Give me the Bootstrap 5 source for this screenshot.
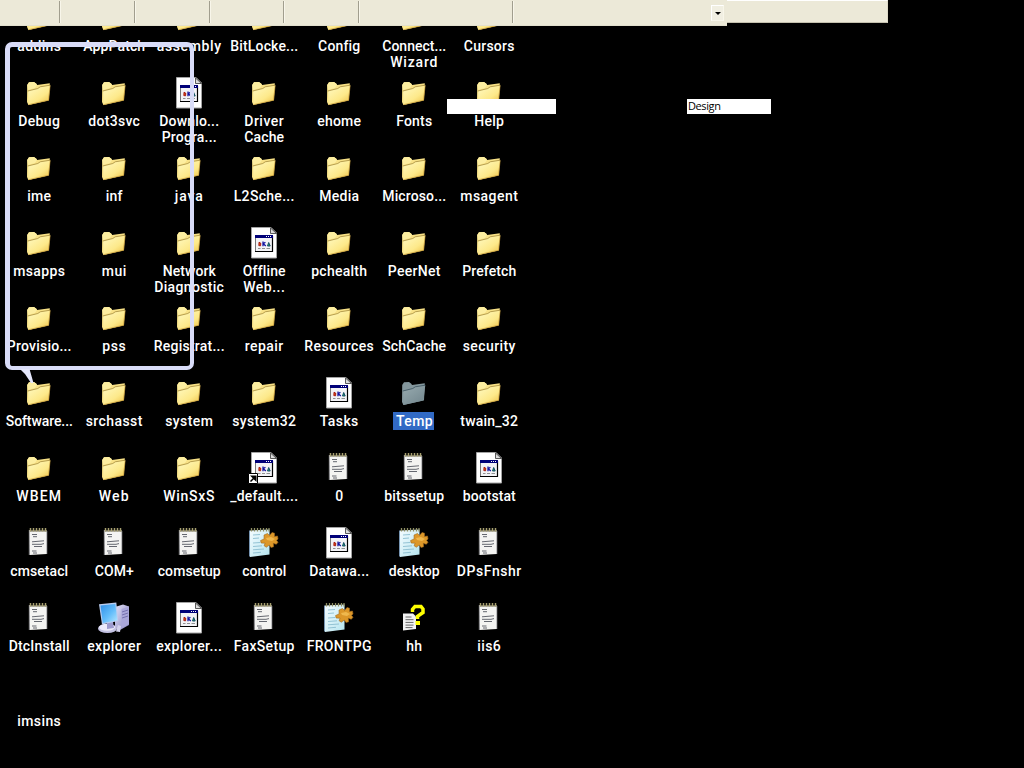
<!DOCTYPE html>
<html lang="en">
<head>
<meta charset="utf-8">
<title>Desktop</title>
<link rel="stylesheet" href="https://cdn.jsdelivr.net/npm/bootstrap@5.3.0/dist/css/bootstrap.min.css">
<style>
  body { background:#000; width:1024px; height:768px; font-family:Roboto,"Liberation Sans",sans-serif; }
  .desk-grid { display:grid; grid-template-columns:repeat(7,75px); grid-auto-rows:75px; padding:2px 0 0 1px; width:526px; }
  .desk-icon { color:#fff; font-size:14px; font-weight:500; line-height:16px; }
  .desk-icon svg { width:32px; height:32px; margin-right:1px; margin-bottom:4px; flex:none; }
  .desk-label { height:16px; width:max-content; padding-left:1.5px; }
  .chosen { background:#316ac5; height:18px; margin-top:-1px; padding:1px 1px 0 3px; }
  .strip-main { width:727px; height:26px; background:#ece9d8; border-bottom:1px solid #e2dfcd; }
  .strip-seg { border-right:1px solid #a19e8e; box-shadow:1px 0 #f8f6ea; height:22px; margin-top:1px; flex:none; }
  .strip-end { width:161px; height:23px; background:#ece9d8; border-top:1px solid #fff; border-right:1px solid #dedac8; border-bottom:1px solid #c4c0ae; }
  .drop-btn { width:13px; height:16px; margin:5px 3px 0 auto; background:#f1efe2; border:1px solid #fff; border-right-color:#f8f6ea; border-bottom-color:#f8f6ea; }
  .drop-btn svg { width:6px; height:3px; }
  .field-box { height:15px; background:#fff; color:#000; top:99px; font:11px/14px "Open Sans","Noto Sans",sans-serif; letter-spacing:-.4px; padding-left:1px; }
  .field-a { left:447px; width:109px; }
  .field-b { left:687px; width:84px; }
  .balloon { left:5px; top:42px; width:189px; height:328px; border:4px solid #d9dcf8; border-top-width:5px; border-left-width:5px; border-radius:7px; }
  .balloon svg { left:8px; top:319px; width:18px; height:18px; }
</style>
</head>
<body class="position-relative overflow-hidden">

<svg class="position-absolute" width="0" height="0" aria-hidden="true">
  <defs>
    <linearGradient id="gold" x1="0" y1="0" x2=".8" y2="1"><stop offset="0" stop-color="#fffac4"/><stop offset=".65" stop-color="#fde98a"/><stop offset="1" stop-color="#efc650"/></linearGradient>
    <linearGradient id="slate" x1="0" y1="0" x2=".8" y2="1"><stop offset="0" stop-color="#98abb0"/><stop offset="1" stop-color="#74888f"/></linearGradient>
    <linearGradient id="glass" x1="0" y1="0" x2="1" y2="1"><stop offset="0" stop-color="#2f8fe8"/><stop offset=".55" stop-color="#63bdfa"/><stop offset="1" stop-color="#b5e6ff"/></linearGradient>
    <linearGradient id="tower" x1="0" y1="0" x2="1" y2="1"><stop offset="0" stop-color="#e4e3f8"/><stop offset="1" stop-color="#8481bd"/></linearGradient>
    <linearGradient id="aqua" x1="0" y1="0" x2="1" y2="1"><stop offset="0" stop-color="#f5fcff"/><stop offset="1" stop-color="#b4e4ef"/></linearGradient>
  </defs>
  <symbol id="folder" viewBox="0 0 32 32">
    <path d="M5.2 8 7 5.2 12 5l2.3 1.8L15 8l12.8-1.7-.8 17L6.4 28 5 25z" fill="#f8e186"/>
    <path d="M5.2 8 7 5.2 12 5l2.3 1.8L15 8l-2 3-7 2z" fill="#fdeea0"/>
    <path d="M6.3 13.7 16 11.5l2.3-1.6 10-1.6-1.8 15.2L6.4 28z" fill="url(#gold)"/>
    <path d="M5.8 14 15.8 11.5l2.4-1.700 10-1.600" fill="none" stroke="#a48a3c" stroke-width=".8"/>
    <path d="m28.200 8.500-1.700 14.800L6.400 27.700" fill="none" stroke="#bd8e2d" stroke-width=".6"/>
  </symbol>
  <symbol id="folder-dim" viewBox="0 0 32 32">
    <path d="M5.2 8 7 5.2 12 5l2.3 1.8L15 8l12.8-1.7-.8 17L6.4 28 5 25z" fill="#84979d"/>
    <path d="M6.3 13.7 16 11.5l2.3-1.6 10-1.6-1.8 15.2L6.4 28z" fill="url(#slate)"/>
    <path d="M5.8 14 15.8 11.5l2.400-1.700 10-1.600" fill="none" stroke="#425863" stroke-width=".9"/>
  </symbol>
  <symbol id="doc" viewBox="0 0 32 32">
    <path d="M4.5.5H24l5.5 5.5v25h-25z" fill="#fff" stroke="#a3a3a3"/>
    <path d="M23.5 1v5.5h6z" fill="#ddd" stroke="#333" stroke-width=".8"/>
    <path d="M8.5 9h17v15.5h-17z" fill="#f3f3f6" stroke="#777"/>
    <path d="M8 24.5h17.5V9" fill="none" stroke="#000" stroke-width="1.2"/>
    <path d="M8 8h18v3H8z" fill="#000078"/>
    <path d="M19 9.500h1m1 0h1m1 0h1" stroke="#fff"/>
    <path d="M12 15.200l1.800 1-.2 2.600-1.800-.2z" fill="#d51" stroke="#900" stroke-width=".8"/>
    <path d="M16 14.500v4.800m0-2.300 2.400-1.700M16.600 17l2.200 2" stroke="#1414a0" stroke-width="1.300"/>
    <path d="m20.500 19 1.200-3.500 1.500 3.500z" fill="#2a7" stroke="#164c63" stroke-width="1"/>
    <path d="M11 21.500h2.500m1.500 0h3m1.500 0H23" stroke="#777" stroke-width=".8"/>
  </symbol>
  <symbol id="shortcut" viewBox="0 0 32 32">
    <use href="#doc"/>
    <path d="M1.500 21.500h9v10h-9z" fill="#fff" stroke="#000"/>
    <path d="m3.500 29.500 4-4M4.800 24.300h4v4z" stroke="#000" stroke-width="1.500"/>
  </symbol>
  <symbol id="note" viewBox="0 0 32 32">
    <path d="M7.300 3h17.500v24L7.700 28z" fill="#f4f4f2"/>
    <path d="M7.300 3v25M24.800 4v23" stroke="#b8b8bd" stroke-width=".7"/>
    <path d="M7.800 3.800h17" stroke="#504b36" stroke-width="1.200"/>
    <path d="M8.500 1v3.500M11.500 1v3.500M14.500 1v3.500M17.500 1v3.500M20.500 1v3.500M23.500 1v3.500" stroke="#a7a070" stroke-width="1.500"/>
    <path d="M10 7.500h5m-4 2.200h4M10 14.800l12-1M10 17.300h9l3-.7M12 19.500h8M10 24h4.500m-3.500 2h4" stroke="#555861" stroke-width=".9" fill="none"/>
  </symbol>
  <symbol id="config" viewBox="0 0 32 32">
    <path d="M3 3.500 22.500 2.500v25L3 30z" fill="url(#aqua)"/>
    <path d="M3 3v27l-1-1V4z" fill="#7795b2"/>
    <path d="M4.500 1v3.500m3-3.500v3.500m3-3.500v3.500m3-3.500v3.500m3-3.500v3.500m3-3.500v3.500m2.500-3.500v3.500" stroke="#8f9064" stroke-width="1.300"/>
    <path d="m6 8 7-.5m-7 4 6-.5m-6 5 7-.5m-7 4 9-.7m-9 4 11-.8M6 26l8-.7" stroke="#8bbdd0" stroke-width=".9"/>
    <path d="m17 8 3.500-1.500 2 2L25 5.500l2.500.7v3.300l3-.5.5 3-1.500 1.300 1.500 2-1.700 2-3-1 .3 3.500-2.600.7-1.700-2.500-3 2.200-2.200-1.500 1-2.500-4-.2-.5-2.500 3.500-1.500z" fill="#dc9729" stroke="#a36a1c" stroke-width=".6"/>
    <path d="m19 11 5-1 4 2-3 2-5-1z" fill="#efb84d"/>
  </symbol>
  <symbol id="computer" viewBox="0 0 32 32">
    <path d="m18 5 8-2.500 6 2V23l-9 5-5-3z" fill="url(#tower)"/>
    <path d="M24.500 7v19.500L32 22V4.500z" fill="#aaa7d9"/>
    <path d="m25 10 6-2m-6 5 6-2m-6 5 6-2" stroke="#6864a6" stroke-width=".8"/>
    <ellipse cx="10.500" cy="26.500" rx="9.500" ry="4.500" fill="#c3c1e2"/>
    <ellipse cx="10" cy="25.300" rx="8" ry="3.500" fill="#ecebfa"/>
    <path d="M10 20h6l1 6-7 1z" fill="#9d9bce"/>
    <path d="m2 2.300 17.300-1.800 2 18.500L5 22.500z" fill="#b9cdf0"/>
    <path d="m3.500 3.600 14.800-1.600 1.900 16.200L5.800 21z" fill="url(#glass)"/>
    <path d="m21 23 3 1-1 6-4-.5z" fill="#d3d1ec"/>
  </symbol>
  <symbol id="help" viewBox="0 0 32 32">
    <path d="M6 11.500h10l3 3V27L6 28.500z" fill="#f3f3f3"/>
    <path d="M8.500 15h6m-6 2.700h8m-8 2.700h8m-8 2.700h8m-8 2.500h7" stroke="#666"/>
    <path d="M15.500 10V7.500l2.500-3h6L26 7v3.500l-5.500 3.800v2.700" fill="none" stroke="#ff0" stroke-width="3.500"/>
    <path d="M18.500 19h4.500v4h-4.500z" fill="#ff0"/>
  </symbol>
</svg>

<main id="desktop" class="desk-grid"></main>

<header class="position-absolute top-0 start-0 d-flex align-items-start">
  <div class="strip-main d-flex">
    <div class="strip-seg" style="width:60px"></div>
    <div class="strip-seg" style="width:75px"></div>
    <div class="strip-seg" style="width:75px"></div>
    <div class="strip-seg" style="width:74px"></div>
    <div class="strip-seg" style="width:75px"></div>
    <div class="strip-seg" style="width:154px"></div>
    <div class="drop-btn d-flex align-items-center justify-content-center"><svg viewBox="0 0 6 3"><path d="M0 0h6L3 3z"/></svg></div>
  </div>
  <div class="strip-end"></div>
</header>

<div class="field-box field-a position-absolute"></div>
<div class="field-box field-b position-absolute">Design</div>
<div class="balloon position-absolute">
  <svg class="position-absolute" viewBox="0 0 18 18"><path d="M2 3h9.500l4 14H13L7 8z" fill="#e4e6fb"/></svg>
</div>

<script src="https://cdn.jsdelivr.net/npm/bootstrap@5.3.0/dist/js/bootstrap.bundle.min.js"></script>
<script>
// Each entry: icon | label line : width in px | second line : width
const items = `folder|addins:43
folder|AppPatch:61
folder|assembly:64
folder|BitLocke...:67
folder|Config:41
folder|Connect...:63|Wizard:47
folder|Cursors:50
folder|Debug:41
folder|dot3svc:51
doc|Downlo...:59|Progra...:54
folder|Driver:39|Cache:39
folder|ehome:43
folder|Fonts:35
folder|Help:29
folder|ime:23
folder|inf:16
folder|java:28
folder|L2Sche...:60
folder|Media:39
folder|Microso...:63
folder|msagent:57
folder|msapps:51
folder|mui:24
folder|Network:52|Diagnostic:69
doc|Offline:41|Web...:41
folder|pchealth:55
folder|PeerNet:52
folder|Prefetch:53
folder|Provisio...:64
folder|pss:23
folder|Registrat...:70
folder|repair:38
folder|Resources:69
folder|SchCache:63
folder|security:52
folder|Software...:66
folder|srchasst:56
folder|system:47
folder|system32:63
doc|Tasks:38
folder-dim|Temp:36
folder|twain_32:57
folder|WBEM:45
folder|Web:30
folder|WinSxS:51
shortcut|_default....:67
note|0:7
note|bitssetup:59
doc|bootstat:52
note|cmsetacl:57
note|COM+:38
note|comsetup:62
config|control:43
doc|Datawa...:59
config|desktop:50
note|DPsFnshr:64
note|DtcInstall:60
computer|explorer:53
doc|explorer...:65
note|FaxSetup:60
config|FRONTPG:64
help|hh:15
note|iis6:23
|imsins:43`.split('\n');
const desktop = document.getElementById('desktop');
for (const item of items) {
  const [icon, ...lines] = item.split('|');
  const cell = document.createElement('div');
  cell.className = 'desk-icon d-flex flex-column align-items-center text-nowrap';
  cell.innerHTML = icon ? `<svg><use href="#${icon}"/></svg>` : '<svg></svg>';
  desktop.append(cell);
  for (const line of lines) {
    const [text, width] = line.split(':');
    const label = document.createElement('span');
    label.className = 'desk-label';
    label.textContent = text;
    cell.append(label);
    const natural = label.getBoundingClientRect().width - 1.5;
    label.style.letterSpacing = (+width + 1 - natural) / text.length + 'px';
    if (icon === 'folder-dim') label.classList.add('chosen');
  }
}
</script>
</body>
</html>
